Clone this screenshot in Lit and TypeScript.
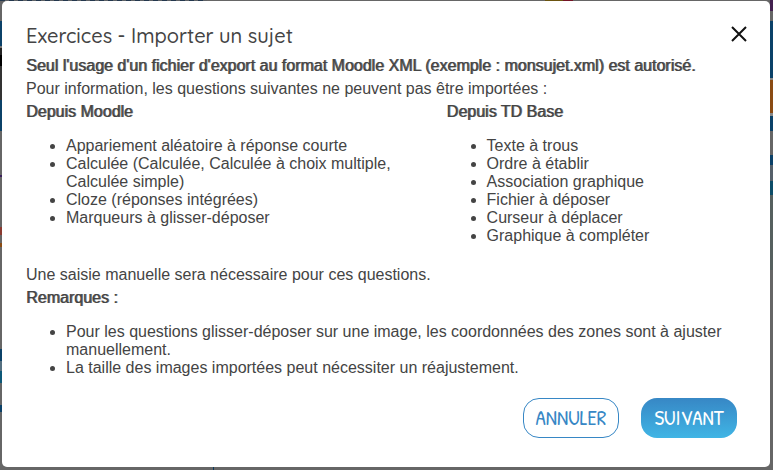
import { LitElement, html, css } from "lit";
import { customElement } from "lit/decorators.js";

@customElement("app-root")
export class AppRoot extends LitElement {
  static styles = css`
    :host {
      display: block;
      box-sizing: border-box;
      min-height: 100vh;
      padding: 1px 3px 3px 2px;
      font: 16px/23px "Liberation Sans", Arial, sans-serif;
      color: #444;
      background:
        linear-gradient(#0b3a5c, #0b3a5c) 213px 100% / 1px 3px no-repeat,
        linear-gradient(90deg, transparent 545px, #6b5410 545px 563px, #741425 563px 573px, transparent 573px) 0 0 / 100% 1px no-repeat,
        repeating-linear-gradient(90deg, #24384e 0 5px, #5f6266 5px 9px) 0 0 / 207px 1px no-repeat,
        linear-gradient(#666 0 21px, #0b4168 21px 46px, #777 46px 48px, #222 48px 55px, #000 55px 66px, #333 66px 100px, #0b4168 100px 131px, #666 131px 175px, #3b205c 175px 177px, #666 177px 227px, #8a3a30 227px 235px, #666 235px 243px, #8a4b13 243px 247px, #666 247px 349px, #0b4168 349px 361px, #557080 361px 371px, #0d5878 371px 383px, #666 383px 405px, #0b4168 405px 412px, #666 412px) 0 0 / 2px 100% no-repeat,
        linear-gradient(#42204f 0 11px, #666 11px 21px, #0b4168 21px 78px, #888 78px 80px, #8a4b13 80px 113px, #888 113px 116px, #0b4168 116px 131px, #666 131px 155px, #0b4168 155px 165px, #56606a 165px 181px, #0d4d68 181px 195px, #56605f 195px 270px, #666 270px) 100% 0 / 3px 100% no-repeat,
        #666;
    }
    .dialog {
      box-sizing: border-box;
      min-height: calc(100vh - 4px);
      padding: 24px 23px 24px 24px;
      border-radius: 5px;
      background: #fff;
    }
    .head {
      display: flex;
      justify-content: space-between;
      align-items: flex-start;
      height: 29px;
    }
    h2 {
      margin: 0;
      font: 500 20px/22px Quicksand, Lato, sans-serif;
    }
    .close {
      display: block;
      padding: 0;
      border: 0;
      background: none;
    }
    .close svg {
      display: block;
    }
    p,
    h3 {
      margin: 0;
      font-size: 16px;
    }
    .strong {
      font-weight: 400;
      text-shadow: 1px 0 0 rgba(68, 68, 68, 0.8);
    }
    .columns {
      display: grid;
      grid-template-columns: 7fr 5fr;
    }
    ul {
      margin: 14px 0 18px;
      padding-left: 40px;
      line-height: 18px;
    }
    .notes {
      margin-bottom: 21px;
    }
    .actions {
      display: flex;
      justify-content: flex-end;
      gap: 22px;
      padding-right: 10px;
    }
    .btn {
      box-sizing: border-box;
      height: 40px;
      width: 96px;
      padding: 0;
      border: 1px solid #3787c5;
      border-radius: 16px;
      background: #fff;
      color: #3787c5;
      font: 400 21px/38px "Patrick Hand", "Pompiere", "Neucha", "Amatic SC", "Caveat", "DejaVu Sans Condensed", sans-serif;
    }
    .primary {
      border: 0;
      background: linear-gradient(#3787c5, #40b5e5);
      color: #fff;
    }
  `;

  private moodle = [
    "Appariement aléatoire à réponse courte",
    "Calculée (Calculée, Calculée à choix multiple, Calculée simple)",
    "Cloze (réponses intégrées)",
    "Marqueurs à glisser-déposer",
  ];

  private tdBase = [
    "Texte à trous",
    "Ordre à établir",
    "Association graphique",
    "Fichier à déposer",
    "Curseur à déplacer",
    "Graphique à compléter",
  ];

  private notes = [
    "Pour les questions glisser-déposer sur une image, les coordonnées des zones sont à ajuster manuellement.",
    "La taille des images importées peut nécessiter un réajustement.",
  ];

  private items(list: string[]) {
    return list.map((text) => html`<li>${text}</li>`);
  }

  render() {
    return html`
      <section class="dialog" role="dialog" aria-labelledby="title">
        <header class="head">
          <h2 id="title">Exercices - Importer un sujet</h2>
          <button class="close" aria-label="Fermer">
            <svg width="16" height="17" viewBox="0 0 16 17">
              <path d="M1 2L15 16M15 2L1 16" stroke="#111" stroke-width="2" fill="none" />
            </svg>
          </button>
        </header>
        <p class="strong">Seul l'usage d'un fichier d'export au format Moodle XML (exemple : monsujet.xml) est autorisé.</p>
        <p>Pour information, les questions suivantes ne peuvent pas être importées :</p>
        <div class="columns">
          <div>
            <h3 class="strong">Depuis Moodle</h3>
            <ul>${this.items(this.moodle)}</ul>
          </div>
          <div>
            <h3 class="strong">Depuis TD Base</h3>
            <ul>${this.items(this.tdBase)}</ul>
          </div>
        </div>
        <p>Une saisie manuelle sera nécessaire pour ces questions.</p>
        <h3 class="strong">Remarques :</h3>
        <ul class="notes">${this.items(this.notes)}</ul>
        <footer class="actions">
          <button class="btn">ANNULER</button>
          <button class="btn primary">SUIVANT</button>
        </footer>
      </section>
    `;
  }
}
